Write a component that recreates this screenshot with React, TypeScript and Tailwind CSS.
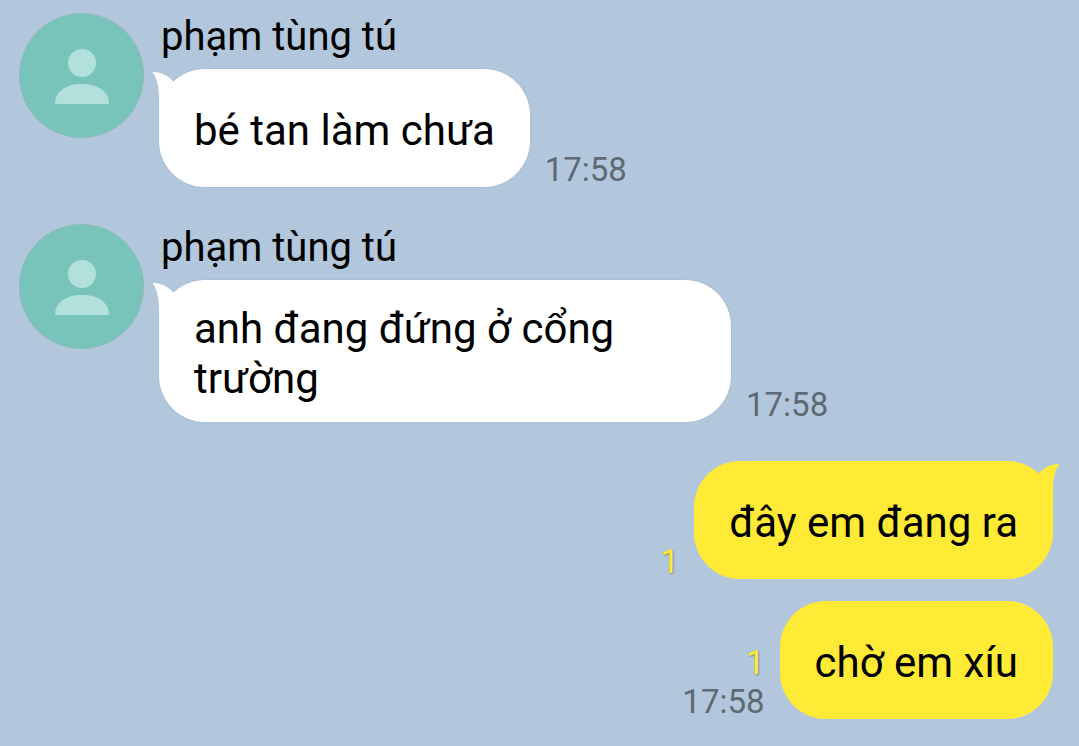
type Message = {
  id: number;
  text: string;
  sender?: string;
  time?: string;
  unread?: number;
  tail?: boolean;
};

const received: Message[] = [
  { id: 1, sender: 'phạm tùng tú', text: 'bé tan làm chưa', time: '17:58' },
  { id: 2, sender: 'phạm tùng tú', text: 'anh đang đứng ở cổng trường', time: '17:58' },
];

const sent: Message[] = [
  { id: 3, text: 'đây em đang ra', unread: 1, tail: true },
  { id: 4, text: 'chờ em xíu', unread: 1, time: '17:58' },
];

function Avatar() {
  return (
    <svg className="h-[125px] w-[125px] shrink-0" viewBox="0 0 125 125" role="img" aria-label="avatar">
      <circle cx="62.5" cy="62.5" r="62.5" fill="#9fb3b8" />
      <circle cx="62.5" cy="62.5" r="62" fill="#79c4ba" />
      <circle cx="63" cy="50" r="14" fill="#b2e1dc" />
      <path d="M36 91C36 79 46 71 63 71S90 79 90 91Z" fill="#b2e1dc" />
    </svg>
  );
}

function Tail({ className }: { className: string }) {
  return (
    <svg className={className} width="36" height="44" viewBox="0 0 36 44" fill="currentColor" aria-hidden="true">
      <path d="M0.5 3C9 3 15 6 21 12L34 30L7 44V28C7 18 5 9 0.5 3Z" />
    </svg>
  );
}

function ReceivedMessage({ message }: { message: Message }) {
  return (
    <li className="flex items-start gap-[15px]">
      <Avatar />
      <div className="min-w-0 flex-1">
        <p className="pl-[2px] text-[40px] leading-[48px]">{message.sender}</p>
        <div className="mt-2 flex items-end gap-[15px]">
          <div className="relative flex min-h-[118px] max-w-[572px] items-center rounded-[46px] bg-white px-[35px] pt-6 pb-[18px] text-[42px] leading-[50px] shadow-[0_0_2px_#a0b4c8]">
            <Tail className="absolute top-0 -left-[7px] text-white" />
            <p className="relative">{message.text}</p>
          </div>
          <time className="text-[33px] leading-[34px] text-[#5d6a74]">{message.time}</time>
        </div>
      </div>
    </li>
  );
}

function SentMessage({ message }: { message: Message }) {
  return (
    <li className="flex items-end justify-end gap-[15px]">
      <div className="flex flex-col items-end gap-[5px] text-[33px] leading-[34px]">
        <span className="text-[#ffea35] [text-shadow:1px_1px_2px_#7d8690]">{message.unread}</span>
        {message.time && <time className="text-[#5d6a74]">{message.time}</time>}
      </div>
      <div className="relative flex min-h-[118px] items-center rounded-[46px] bg-[#ffea35] px-[35px] pt-6 pb-[18px] text-[42px] leading-[50px]">
        {message.tail && <Tail className="absolute top-0 -right-[7px] -scale-x-100 text-[#ffea35]" />}
        <p className="relative">{message.text}</p>
      </div>
    </li>
  );
}

export default function App() {
  return (
    <main className="min-h-screen bg-[#b2c7db] pt-[13px] pr-[26px] pb-[27px] pl-[19px] font-[Roboto,sans-serif] text-black">
      <ul className="flex flex-col gap-[37px]">
        {received.map((message) => (
          <ReceivedMessage key={message.id} message={message} />
        ))}
      </ul>
      <ul className="mt-[39px] flex flex-col gap-[22px]">
        {sent.map((message) => (
          <SentMessage key={message.id} message={message} />
        ))}
      </ul>
    </main>
  );
}
